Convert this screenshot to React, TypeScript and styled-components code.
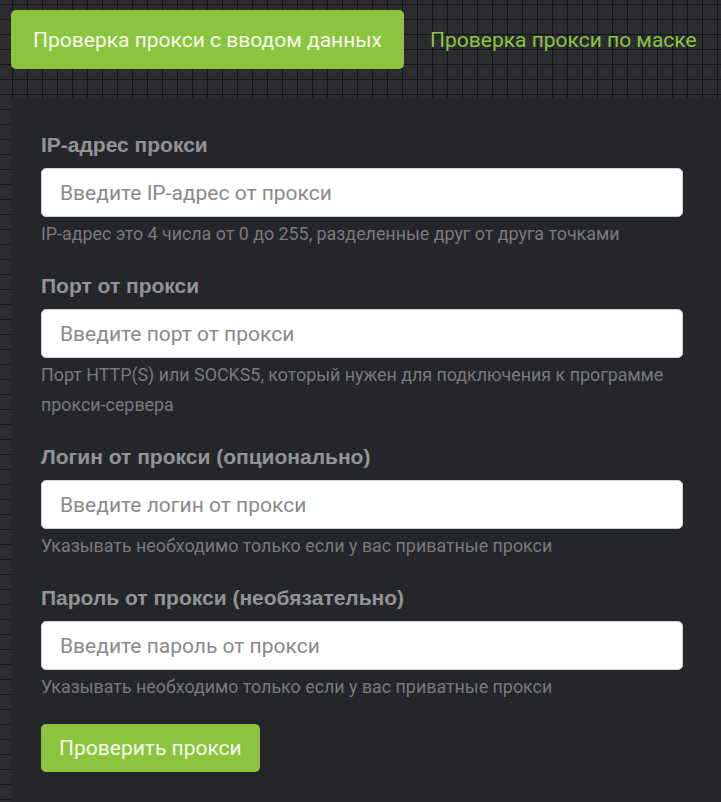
import React from "react";
import styled, { createGlobalStyle } from "styled-components";

const GlobalStyle = createGlobalStyle`
  html, body {
    margin: 0;
    padding: 0;
    background-color: #2b2c30;
    background-image:
      linear-gradient(to right, #141517 1px, transparent 1px),
      linear-gradient(to bottom, #141517 1px, transparent 1px);
    background-size: 15px 15px;
    background-position: 12px 4px;
    min-height: 100vh;
    overflow: hidden;
  }
  * { box-sizing: border-box; }
`;

const Page = styled.div`
  padding: 10px 0 0 11px;
  font-family: Roboto, "Noto Sans", Arial, sans-serif;
`;

const Tabs = styled.div`
  display: flex;
  gap: 4px;
  align-items: stretch;
`;

const Tab = styled.button<{ $active?: boolean }>`
  height: 59px;
  padding: 0 22px;
  border: none;
  border-radius: 5px;
  font-family: Roboto, "Noto Sans", Arial, sans-serif;
  font-size: 21px;
  cursor: pointer;
  background: ${(p) => (p.$active ? "#8bc53f" : "transparent")};
  color: ${(p) => (p.$active ? "#f6fbea" : "#8bc53f")};
`;

const Panel = styled.div`
  margin-top: 29px;
  background: #25262a;
  padding: 34px 38px 40px 30px;
  min-height: 720px;
`;

const Field = styled.div`
  display: flex;
  flex-direction: column;
  & + & {
    margin-top: 24px;
  }
`;

const Label = styled.label`
  font-family: "Liberation Sans", Arial, sans-serif;
  font-weight: 700;
  font-size: 21px;
  line-height: 26px;
  color: #939496;
  margin-bottom: 10px;
`;

const Input = styled.input`
  height: 49px;
  width: 100%;
  border: 1px solid #cfd3d8;
  border-radius: 5px;
  background: #fff;
  padding: 0 18px;
  font-family: Roboto, "Noto Sans", Arial, sans-serif;
  font-size: 21px;
  color: #333;
  outline: none;
  &::placeholder {
    color: #8a8a8a;
  }
`;

const Help = styled.div`
  margin-top: 2px;
  font-size: 17.85px;
  line-height: 30px;
  color: #7a7a7a;
`;

const Submit = styled.button`
  margin-top: 22px;
  align-self: flex-start;
  height: 48px;
  padding: 0 18px;
  border: none;
  border-radius: 5px;
  background: #8bc53f;
  color: #f6fbea;
  font-family: Roboto, "Noto Sans", Arial, sans-serif;
  font-size: 21px;
  cursor: pointer;
`;

const fields = [
  {
    label: "IP-адрес прокси",
    placeholder: "Введите IP-адрес от прокси",
    help: "IP-адрес это 4 числа от 0 до 255, разделенные друг от друга точками",
  },
  {
    label: "Порт от прокси",
    placeholder: "Введите порт от прокси",
    help: "Порт HTTP(S) или SOCKS5, который нужен для подключения к программе прокси-сервера",
  },
  {
    label: "Логин от прокси (опционально)",
    placeholder: "Введите логин от прокси",
    help: "Указывать необходимо только если у вас приватные прокси",
  },
  {
    label: "Пароль от прокси (необязательно)",
    placeholder: "Введите пароль от прокси",
    help: "Указывать необходимо только если у вас приватные прокси",
  },
];

export default function App() {
  return (
    <>
      <GlobalStyle />
      <Page>
        <Tabs>
          <Tab $active>Проверка прокси с вводом данных</Tab>
          <Tab>Проверка прокси по маске</Tab>
        </Tabs>
        <Panel>
          {fields.map((f) => (
            <Field key={f.label}>
              <Label>{f.label}</Label>
              <Input placeholder={f.placeholder} />
              <Help>{f.help}</Help>
            </Field>
          ))}
          <Submit>Проверить прокси</Submit>
        </Panel>
      </Page>
    </>
  );
}
